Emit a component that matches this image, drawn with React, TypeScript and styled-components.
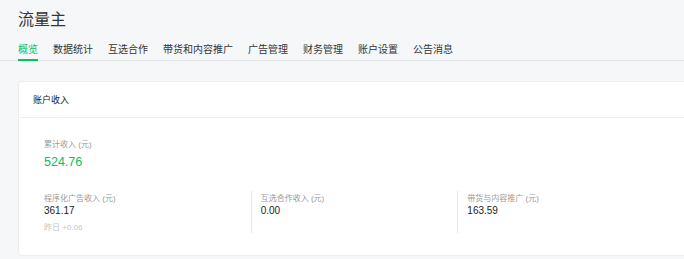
import styled, { createGlobalStyle } from 'styled-components'

const GlobalStyle = createGlobalStyle`
    html, body {
        margin: 0;
        padding: 0;
        background: #f6f7f9;
        overflow: hidden;
    }

    body {
        font-family: 'Liberation Sans', 'Noto Sans CJK SC', sans-serif;
        color: #353535;
    }
`

const GREEN = '#07c160'

const tabs = ['概览', '数据统计', '互选合作', '带货和内容推广', '广告管理', '财务管理', '账户设置', '公告消息']

const stats = [
    { label: '程序化广告收入 (元)', value: '361.17', extra: '昨日 +0.06' },
    { label: '互选合作收入 (元)', value: '0.00' },
    { label: '带货与内容推广 (元)', value: '163.59' },
]

const Page = styled.div`
    width: 684px;
    height: 259px;
    padding-top: 9px;
    box-sizing: border-box;
    overflow: hidden;
`

const Title = styled.h1`
    margin: 0 18px;
    font-size: 16px;
    line-height: 22px;
    font-weight: 400;
    color: #353535;
`

const Nav = styled.nav`
    display: flex;
    gap: 15px;
    margin-top: 12px;
    padding: 0 18px;
    border-bottom: 1px solid #e2e4e8;
`

const Tab = styled.div<{ $active?: boolean }>`
    font-size: 10px;
    line-height: 14px;
    padding-bottom: 2px;
    white-space: nowrap;
    color: ${(p) => (p.$active ? GREEN : '#353535')};
    border-bottom: 2px solid ${(p) => (p.$active ? GREEN : 'transparent')};
    margin-bottom: -1px;
`

const Card = styled.section`
    width: 670px;
    margin: 20px 0 0 18px;
    background: #fff;
    border: 1px solid #eceef1;
    border-radius: 4px;
`

const CardHeader = styled.div`
    height: 35px;
    display: flex;
    align-items: center;
    padding: 0 14px;
    font-size: 9px;
    color: #222;
    border-bottom: 1px solid #eff0f2;
`

const CardBody = styled.div`
    padding: 21px 25px 22px 25px;
`

const Label = styled.div`
    font-size: 8px;
    line-height: 12px;
    color: #9a9a9a;
    white-space: nowrap;
`

const TotalValue = styled.div`
    margin-top: 3px;
    font-size: 12.5px;
    line-height: 16px;
    color: ${GREEN};
`

const StatGrid = styled.div`
    display: grid;
    grid-template-columns: repeat(3, 1fr);
    margin-top: 21px;
`

const StatCol = styled.div<{ $divider?: boolean }>`
    padding: 3px 0 0 ${(p) => (p.$divider ? '9px' : '0')};
    border-left: ${(p) => (p.$divider ? '1px solid #e8e9ec' : 'none')};
    min-height: 39px;

    ${Label} {
        line-height: 10px;
    }
`

const StatValue = styled.div`
    font-size: 10px;
    line-height: 13px;
    color: #222;
`

const Extra = styled.div`
    margin-top: 6px;
    font-size: 8px;
    line-height: 10px;
    color: #c4c4c4;
`

export default function App() {
    return (
        <Page>
            <GlobalStyle />
            <Title>流量主</Title>
            <Nav>
                {tabs.map((t, i) => (
                    <Tab key={t} $active={i === 0}>
                        {t}
                    </Tab>
                ))}
            </Nav>
            <Card>
                <CardHeader>账户收入</CardHeader>
                <CardBody>
                    <Label>累计收入 (元)</Label>
                    <TotalValue>524.76</TotalValue>
                    <StatGrid>
                        {stats.map((s, i) => (
                            <StatCol key={s.label} $divider={i > 0}>
                                <Label>{s.label}</Label>
                                <StatValue>{s.value}</StatValue>
                                {s.extra && <Extra>{s.extra}</Extra>}
                            </StatCol>
                        ))}
                    </StatGrid>
                </CardBody>
            </Card>
        </Page>
    )
}
